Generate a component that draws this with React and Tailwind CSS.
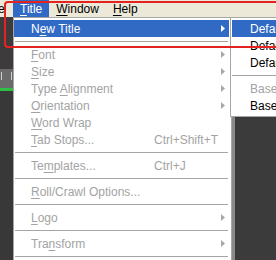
import React from "react";

const font = { fontFamily: '"Liberation Sans", Arial, sans-serif' };

function Arrow({ color = "#a0a0a0" }) {
  return (
    <svg width="4" height="7" viewBox="0 0 4 7" className="shrink-0">
      <path d="M0 0 L4 3.5 L0 7 Z" fill={color} />
    </svg>
  );
}

// label with one underlined mnemonic letter
function Label({ pre = "", key_, post = "" }) {
  return (
    <span className="whitespace-nowrap">
      {pre}
      <span className="underline underline-offset-[2px] decoration-1">{key_}</span>
      {post}
    </span>
  );
}

function Separator() {
  return (
    <div className="h-[9px] flex flex-col justify-center px-[1px]">
      <div className="h-px bg-[#a6a6a6]" />
    </div>
  );
}

function Item({ label, shortcut, arrow, active, disabled }) {
  const color = active ? "text-white" : disabled ? "text-[#a3a3a3]" : "text-black";
  return (
    <div
      className={`h-[17px] flex items-center pl-[17px] pr-[4px] ${color} ${
        active ? "bg-[#316ac5]" : ""
      }`}
    >
      <div className="w-[123px] shrink-0">{label}</div>
      <div className="flex-1 whitespace-nowrap">{shortcut}</div>
      {arrow && <Arrow color={active ? "#ffffff" : "#a8a8a8"} />}
    </div>
  );
}

export default function App() {
  return (
    <div
      className="relative w-[276px] h-[260px] overflow-hidden bg-[#3b3b3b] text-[12px] leading-none"
      style={font}
    >
      {/* menu bar */}
      <div className="h-[17px] bg-[#ece9d8] flex items-stretch text-black">
        <div className="w-[13px] overflow-hidden flex items-center">
          <span className="ml-[-2px]">e</span>
        </div>
        <div className="bg-[#316ac5] text-white px-[7px] flex items-center">
          <Label key_="T" post="itle" />
        </div>
        <div className="px-[7px] flex items-center">
          <Label key_="W" post="indow" />
        </div>
        <div className="px-[7px] flex items-center">
          <Label key_="H" post="elp" />
        </div>
      </div>

      {/* left strip of the editor behind the menu */}
      <div className="w-[13px] flex flex-col">
        <div className="h-[52px] bg-[#3d3b3b]" />
        <div className="h-[19px] bg-[#6a6a6a] flex justify-between items-start pt-[3px] px-[1px]">
          <div className="w-px h-[8px] bg-[#cfcfcf]" />
          <div className="w-px h-[8px] bg-[#cfcfcf]" />
        </div>
        <div className="h-[3px] bg-[#2fbf45]" />
        <div className="h-[169px] bg-[#383838]" />
      </div>

      {/* Title dropdown */}
      <div className="absolute left-[13px] top-[17px] w-[219px] bg-white border border-[#a7a6a2] pt-[2px] pr-[2px] shadow-[3px_0_0_#8a8a8a]">
        <Item active label={<Label pre="N" key_="e" post="w Title" />} arrow />
        <Separator />
        <Item disabled label={<Label key_="F" post="ont" />} arrow />
        <Item disabled label={<Label key_="S" post="ize" />} arrow />
        <Item disabled label={<Label pre="Type " key_="A" post="lignment" />} arrow />
        <Item disabled label={<Label key_="O" post="rientation" />} arrow />
        <Item disabled label={<Label key_="W" post="ord Wrap" />} />
        <Item disabled label={<Label key_="T" post="ab Stops..." />} shortcut="Ctrl+Shift+T" />
        <Separator />
        <Item disabled label={<Label pre="Te" key_="m" post="plates..." />} shortcut="Ctrl+J" />
        <Separator />
        <Item disabled label={<Label key_="R" post="oll/Crawl Options..." />} />
        <Separator />
        <Item disabled label={<Label key_="L" post="ogo" />} arrow />
        <Separator />
        <Item disabled label={<Label pre="Tra" key_="n" post="sform" />} arrow />
        <Separator />
      </div>

      {/* New Title submenu */}
      <div className="absolute left-[230px] top-[17px] w-[90px] bg-white border border-[#a7a6a2] pt-[2px] pb-[2px]">
        <div className="h-[17px] flex items-center pl-[18px] bg-[#316ac5] text-white ml-[1px]">Default</div>
        <div className="h-[17px] flex items-center pl-[19px] text-black">Default</div>
        <div className="h-[17px] flex items-center pl-[19px] text-black">Default</div>
        <Separator />
        <div className="h-[17px] flex items-center pl-[19px] text-[#a3a3a3]">Base</div>
        <div className="h-[17px] flex items-center pl-[19px] text-black">Base</div>
      </div>

      {/* red annotation frame */}
      <div className="absolute left-[4px] top-[1px] w-[290px] h-[47px] border-2 border-[#e3231f] rounded-[4px]" />
    </div>
  );
}
